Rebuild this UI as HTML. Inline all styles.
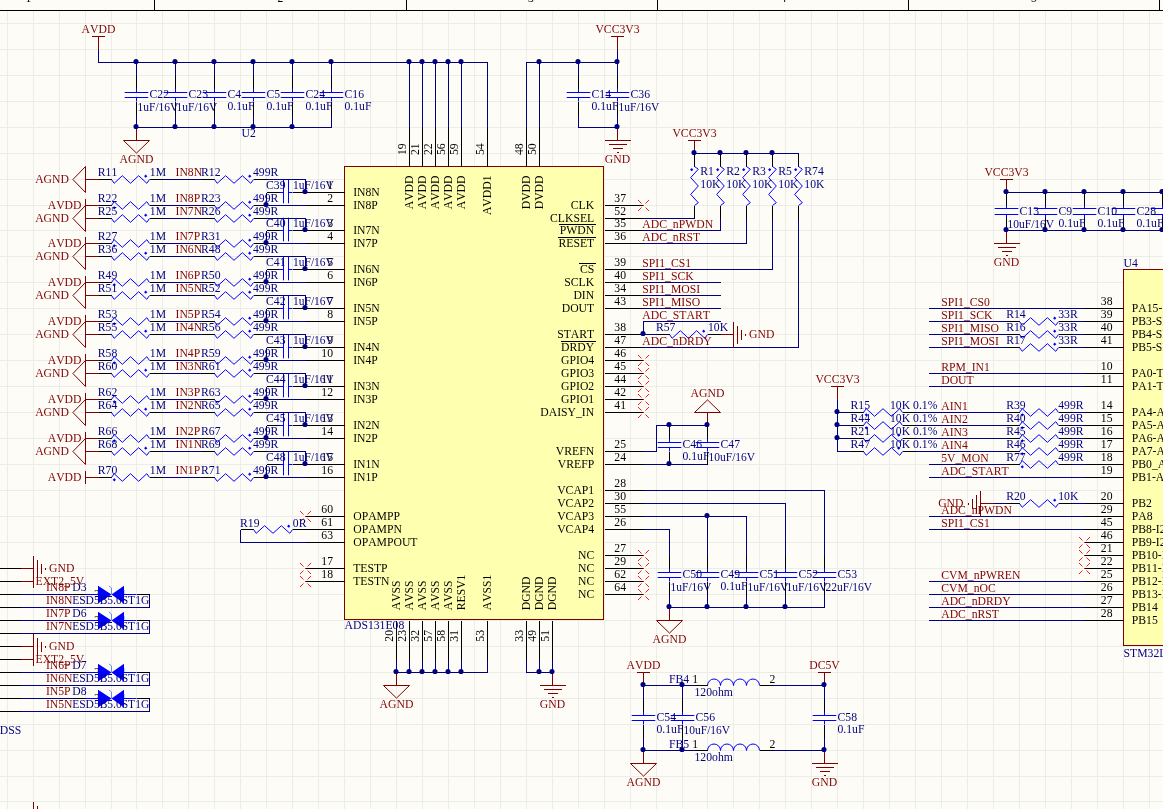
<!DOCTYPE html>
<html lang="en"><head><meta charset="utf-8"><title>Schematic</title>
<style>
html,body{margin:0;padding:0;background:#fefcf7;}
body{width:1163px;height:809px;overflow:hidden;}
svg{display:block;}
text{font-family:"Liberation Serif",serif;font-size:11.7px;font-kerning:none;font-variant-ligatures:none;}
.d{fill:#000080}.n{fill:#800000}.p{fill:#000000}.v{font-size:11.5px}
</style></head>
<body>
<svg width="1163" height="809" viewBox="0 0 1163 809">
<rect width="1163" height="809" fill="#fefcf7"/>
<path d="M7.5 11L7.5 809M33.5 11L33.5 809M59.5 11L59.5 809M85.5 11L85.5 809M111.5 11L111.5 809M136.5 11L136.5 809M162.5 11L162.5 809M188.5 11L188.5 809M214.5 11L214.5 809M240.5 11L240.5 809M266.5 11L266.5 809M292.5 11L292.5 809M318.5 11L318.5 809M344.5 11L344.5 809M370.5 11L370.5 809M396.5 11L396.5 809M422.5 11L422.5 809M448.5 11L448.5 809M474.5 11L474.5 809M500.5 11L500.5 809M526.5 11L526.5 809M552.5 11L552.5 809M578.5 11L578.5 809M604.5 11L604.5 809M630.5 11L630.5 809M656.5 11L656.5 809M682.5 11L682.5 809M707.5 11L707.5 809M733.5 11L733.5 809M759.5 11L759.5 809M785.5 11L785.5 809M811.5 11L811.5 809M837.5 11L837.5 809M863.5 11L863.5 809M889.5 11L889.5 809M915.5 11L915.5 809M941.5 11L941.5 809M967.5 11L967.5 809M993.5 11L993.5 809M1019.5 11L1019.5 809M1045.5 11L1045.5 809M1071.5 11L1071.5 809M1097.5 11L1097.5 809M1123.5 11L1123.5 809M1149.5 11L1149.5 809M0 23.5L1163 23.5M0 49.5L1163 49.5M0 75.5L1163 75.5M0 101.5L1163 101.5M0 127.5L1163 127.5M0 153.5L1163 153.5M0 179.5L1163 179.5M0 205.5L1163 205.5M0 230.5L1163 230.5M0 256.5L1163 256.5M0 282.5L1163 282.5M0 308.5L1163 308.5M0 334.5L1163 334.5M0 360.5L1163 360.5M0 386.5L1163 386.5M0 412.5L1163 412.5M0 438.5L1163 438.5M0 464.5L1163 464.5M0 490.5L1163 490.5M0 516.5L1163 516.5M0 542.5L1163 542.5M0 568.5L1163 568.5M0 594.5L1163 594.5M0 620.5L1163 620.5M0 646.5L1163 646.5M0 672.5L1163 672.5M0 698.5L1163 698.5M0 724.5L1163 724.5M0 750.5L1163 750.5M0 776.5L1163 776.5M0 801.5L1163 801.5" stroke="#ececE8" stroke-width="1" fill="none" shape-rendering="crispEdges"/>
<path d="M0 10.5H1163M154.5 0V10.5M406.5 0V10.5M657.5 0V10.5M908.5 0V10.5M1159.5 0V10.5" stroke="#000" stroke-width="1" fill="none" shape-rendering="crispEdges"/>
<rect x="344.5" y="166.5" width="259" height="453" fill="#ffffb0" stroke="#800000" stroke-width="1" shape-rendering="crispEdges"/>
<rect x="1123.5" y="269.5" width="44.5" height="376" fill="#ffffb0" stroke="#800000" stroke-width="1" shape-rendering="crispEdges"/>
<path d="M98.5 49.5L98.5 62.5L487.5 62.5L487.5 127.5M136.5 62.5L136.5 75.5M136.5 114.5L136.5 127.5M175.5 62.5L175.5 75.5M175.5 114.5L175.5 127.5M214.5 62.5L214.5 75.5M214.5 114.5L214.5 127.5M253.5 62.5L253.5 75.5M253.5 114.5L253.5 127.5M292.5 62.5L292.5 75.5M292.5 114.5L292.5 127.5M331.5 62.5L331.5 75.5M331.5 114.5L331.5 127.5M136.5 127.5L331.5 127.5M409.5 62.5L409.5 127.5M422.5 62.5L422.5 127.5M435.5 62.5L435.5 127.5M448.5 62.5L448.5 127.5M461.5 62.5L461.5 127.5M526.5 127.5L526.5 62.5L617.5 62.5M539.5 62.5L539.5 127.5M578.5 62.5L578.5 75.5M578.5 114.5L578.5 127.5M617.5 62.5L617.5 75.5M617.5 114.5L617.5 127.5M578.5 127.5L617.5 127.5M617.5 49.5L617.5 62.5M694.5 153.5L798.5 153.5M643.5 218.5L694.5 218.5M643.5 230.5L720.5 230.5L720.5 218.5M643.5 243.5L746.5 243.5L746.5 218.5M643.5 269.5L772.5 269.5L772.5 218.5M643.5 347.5L798.5 347.5L798.5 218.5M643.5 282.5L720.5 282.5M643.5 295.5L720.5 295.5M643.5 308.5L720.5 308.5M643.5 334.5L643.5 321.5L720.5 321.5M643.5 334.5L656.5 334.5M643.5 451.5L656.5 451.5L656.5 425.5L707.5 425.5M643.5 464.5L707.5 464.5M643.5 490.5L824.5 490.5L824.5 555.5M643.5 503.5L785.5 503.5L785.5 555.5M643.5 516.5L746.5 516.5L746.5 555.5M707.5 516.5L707.5 555.5M643.5 529.5L669.5 529.5L669.5 555.5M669.5 594.5L669.5 607.5M707.5 594.5L707.5 607.5M746.5 594.5L746.5 607.5M785.5 594.5L785.5 607.5M824.5 594.5L824.5 607.5M669.5 607.5L824.5 607.5M396.5 659.5L396.5 672.5M409.5 659.5L409.5 672.5M422.5 659.5L422.5 672.5M435.5 659.5L435.5 672.5M448.5 659.5L448.5 672.5M461.5 659.5L461.5 672.5M396.5 672.5L487.5 672.5L487.5 659.5M526.5 659.5L526.5 672.5L552.5 672.5L552.5 659.5M539.5 659.5L539.5 672.5M162.5 179.5L201.5 179.5M266.5 179.5L305.5 179.5L305.5 192.5M266.5 192.5L266.5 205.5M162.5 205.5L201.5 205.5M266.5 205.5L305.5 205.5M162.5 218.5L201.5 218.5M266.5 218.5L305.5 218.5L305.5 230.5M266.5 230.5L266.5 243.5M162.5 243.5L201.5 243.5M266.5 243.5L305.5 243.5M162.5 256.5L201.5 256.5M266.5 256.5L305.5 256.5L305.5 269.5M266.5 269.5L266.5 282.5M162.5 282.5L201.5 282.5M266.5 282.5L305.5 282.5M162.5 295.5L201.5 295.5M266.5 295.5L305.5 295.5L305.5 308.5M266.5 308.5L266.5 321.5M162.5 321.5L201.5 321.5M266.5 321.5L305.5 321.5M162.5 334.5L201.5 334.5M266.5 334.5L305.5 334.5L305.5 347.5M266.5 347.5L266.5 360.5M162.5 360.5L201.5 360.5M266.5 360.5L305.5 360.5M162.5 373.5L201.5 373.5M266.5 373.5L305.5 373.5L305.5 386.5M266.5 386.5L266.5 399.5M162.5 399.5L201.5 399.5M266.5 399.5L305.5 399.5M162.5 412.5L201.5 412.5M266.5 412.5L305.5 412.5L305.5 425.5M266.5 425.5L266.5 438.5M162.5 438.5L201.5 438.5M266.5 438.5L305.5 438.5M162.5 451.5L201.5 451.5M266.5 451.5L305.5 451.5L305.5 464.5M266.5 464.5L266.5 477.5M162.5 477.5L201.5 477.5M266.5 477.5L305.5 477.5M240.5 529.5L240.5 542.5L305.5 542.5M20.5 594.5L72.5 594.5M149.5 594.5L149.5 607.5L20.5 607.5M20.5 620.5L72.5 620.5M149.5 620.5L149.5 633.5L20.5 633.5M20.5 672.5L72.5 672.5M149.5 672.5L149.5 685.5L20.5 685.5M20.5 698.5L72.5 698.5M149.5 698.5L149.5 711.5L20.5 711.5M643.5 685.5L694.5 685.5M772.5 685.5L824.5 685.5M643.5 750.5L694.5 750.5M772.5 750.5L824.5 750.5M643.5 685.5L643.5 698.5M643.5 737.5L643.5 750.5M682.5 685.5L682.5 698.5M682.5 737.5L682.5 750.5M824.5 685.5L824.5 698.5M824.5 737.5L824.5 750.5M1006.5 192.5L1163 192.5M1006.5 230.5L1163 230.5M928.5 308.5L1084.5 308.5M928.5 321.5L1006.5 321.5M1071.5 321.5L1084.5 321.5M928.5 334.5L1006.5 334.5M1071.5 334.5L1084.5 334.5M928.5 347.5L1006.5 347.5M1071.5 347.5L1084.5 347.5M928.5 373.5L1084.5 373.5M928.5 386.5L1084.5 386.5M915.5 412.5L1006.5 412.5M1071.5 412.5L1084.5 412.5M915.5 425.5L1006.5 425.5M1071.5 425.5L1084.5 425.5M915.5 438.5L1006.5 438.5M1071.5 438.5L1084.5 438.5M915.5 451.5L1006.5 451.5M1071.5 451.5L1084.5 451.5M928.5 464.5L1006.5 464.5M1071.5 464.5L1084.5 464.5M928.5 477.5L1084.5 477.5M993.5 503.5L1006.5 503.5M1071.5 503.5L1084.5 503.5M928.5 516.5L1084.5 516.5M928.5 529.5L1084.5 529.5M928.5 581.5L1084.5 581.5M928.5 594.5L1084.5 594.5M928.5 607.5L1084.5 607.5M928.5 620.5L1084.5 620.5M837.5 399.5L837.5 451.5L850.5 451.5M837.5 412.5L850.5 412.5M837.5 425.5L850.5 425.5M837.5 438.5L850.5 438.5" stroke="#000080" stroke-width="1" fill="none" shape-rendering="crispEdges"/>
<path d="M305.5 192.5L344.5 192.5M305.5 205.5L344.5 205.5M305.5 230.5L344.5 230.5M305.5 243.5L344.5 243.5M305.5 269.5L344.5 269.5M305.5 282.5L344.5 282.5M305.5 308.5L344.5 308.5M305.5 321.5L344.5 321.5M305.5 347.5L344.5 347.5M305.5 360.5L344.5 360.5M305.5 386.5L344.5 386.5M305.5 399.5L344.5 399.5M305.5 425.5L344.5 425.5M305.5 438.5L344.5 438.5M305.5 464.5L344.5 464.5M305.5 477.5L344.5 477.5M305.5 516.5L344.5 516.5M305.5 529.5L344.5 529.5M305.5 542.5L344.5 542.5M305.5 568.5L344.5 568.5M305.5 581.5L344.5 581.5M604.5 205.5L643.5 205.5M604.5 218.5L643.5 218.5M604.5 230.5L643.5 230.5M559.26 224.5L596.2 224.5M604.5 243.5L643.5 243.5M557.94 237.5L596.2 237.5M604.5 269.5L643.5 269.5M579.39 263.5L596.2 263.5M604.5 282.5L643.5 282.5M604.5 295.5L643.5 295.5M604.5 308.5L643.5 308.5M604.5 334.5L643.5 334.5M604.5 347.5L643.5 347.5M560.55 341.5L596.2 341.5M604.5 360.5L643.5 360.5M604.5 373.5L643.5 373.5M604.5 386.5L643.5 386.5M604.5 399.5L643.5 399.5M604.5 412.5L643.5 412.5M604.5 451.5L643.5 451.5M604.5 464.5L643.5 464.5M604.5 490.5L643.5 490.5M604.5 503.5L643.5 503.5M604.5 516.5L643.5 516.5M604.5 529.5L643.5 529.5M604.5 555.5L643.5 555.5M604.5 568.5L643.5 568.5M604.5 581.5L643.5 581.5M604.5 594.5L643.5 594.5M409.5 166.5L409.5 127.5M422.5 166.5L422.5 127.5M435.5 166.5L435.5 127.5M448.5 166.5L448.5 127.5M461.5 166.5L461.5 127.5M487.5 166.5L487.5 127.5M526.5 166.5L526.5 127.5M539.5 166.5L539.5 127.5M396.5 620.5L396.5 659.5M409.5 620.5L409.5 659.5M422.5 620.5L422.5 659.5M435.5 620.5L435.5 659.5M448.5 620.5L448.5 659.5M461.5 620.5L461.5 659.5M487.5 620.5L487.5 659.5M526.5 620.5L526.5 659.5M539.5 620.5L539.5 659.5M552.5 620.5L552.5 659.5M136.5 75.5L136.5 88.5M136.5 101.5L136.5 114.5M175.5 75.5L175.5 88.5M175.5 101.5L175.5 114.5M214.5 75.5L214.5 88.5M214.5 101.5L214.5 114.5M253.5 75.5L253.5 88.5M253.5 101.5L253.5 114.5M292.5 75.5L292.5 88.5M292.5 101.5L292.5 114.5M331.5 75.5L331.5 88.5M331.5 101.5L331.5 114.5M578.5 75.5L578.5 88.5M578.5 101.5L578.5 114.5M617.5 75.5L617.5 88.5M617.5 101.5L617.5 114.5M694.5 153.5L694.5 166.5M694.5 205.5L694.5 218.5M720.5 153.5L720.5 166.5M720.5 205.5L720.5 218.5M746.5 153.5L746.5 166.5M746.5 205.5L746.5 218.5M772.5 153.5L772.5 166.5M772.5 205.5L772.5 218.5M798.5 153.5L798.5 166.5M798.5 205.5L798.5 218.5M656.5 334.5L669.5 334.5M707.5 334.5L720.5 334.5M669.5 425.5L669.5 438.5M669.5 451.5L669.5 464.5M707.5 425.5L707.5 438.5M707.5 451.5L707.5 464.5M669.5 555.5L669.5 568.5M669.5 581.5L669.5 594.5M707.5 555.5L707.5 568.5M707.5 581.5L707.5 594.5M746.5 555.5L746.5 568.5M746.5 581.5L746.5 594.5M785.5 555.5L785.5 568.5M785.5 581.5L785.5 594.5M824.5 555.5L824.5 568.5M824.5 581.5L824.5 594.5M98.5 179.5L111.5 179.5M149.5 179.5L162.5 179.5M201.5 179.5L214.5 179.5M253.5 179.5L266.5 179.5M266.5 192.5L279.5 192.5M292.5 192.5L305.5 192.5M98.5 205.5L111.5 205.5M149.5 205.5L162.5 205.5M201.5 205.5L214.5 205.5M253.5 205.5L266.5 205.5M98.5 218.5L111.5 218.5M149.5 218.5L162.5 218.5M201.5 218.5L214.5 218.5M253.5 218.5L266.5 218.5M266.5 230.5L279.5 230.5M292.5 230.5L305.5 230.5M98.5 243.5L111.5 243.5M149.5 243.5L162.5 243.5M201.5 243.5L214.5 243.5M253.5 243.5L266.5 243.5M98.5 256.5L111.5 256.5M149.5 256.5L162.5 256.5M201.5 256.5L214.5 256.5M253.5 256.5L266.5 256.5M266.5 269.5L279.5 269.5M292.5 269.5L305.5 269.5M98.5 282.5L111.5 282.5M149.5 282.5L162.5 282.5M201.5 282.5L214.5 282.5M253.5 282.5L266.5 282.5M98.5 295.5L111.5 295.5M149.5 295.5L162.5 295.5M201.5 295.5L214.5 295.5M253.5 295.5L266.5 295.5M266.5 308.5L279.5 308.5M292.5 308.5L305.5 308.5M98.5 321.5L111.5 321.5M149.5 321.5L162.5 321.5M201.5 321.5L214.5 321.5M253.5 321.5L266.5 321.5M98.5 334.5L111.5 334.5M149.5 334.5L162.5 334.5M201.5 334.5L214.5 334.5M253.5 334.5L266.5 334.5M266.5 347.5L279.5 347.5M292.5 347.5L305.5 347.5M98.5 360.5L111.5 360.5M149.5 360.5L162.5 360.5M201.5 360.5L214.5 360.5M253.5 360.5L266.5 360.5M98.5 373.5L111.5 373.5M149.5 373.5L162.5 373.5M201.5 373.5L214.5 373.5M253.5 373.5L266.5 373.5M266.5 386.5L279.5 386.5M292.5 386.5L305.5 386.5M98.5 399.5L111.5 399.5M149.5 399.5L162.5 399.5M201.5 399.5L214.5 399.5M253.5 399.5L266.5 399.5M98.5 412.5L111.5 412.5M149.5 412.5L162.5 412.5M201.5 412.5L214.5 412.5M253.5 412.5L266.5 412.5M266.5 425.5L279.5 425.5M292.5 425.5L305.5 425.5M98.5 438.5L111.5 438.5M149.5 438.5L162.5 438.5M201.5 438.5L214.5 438.5M253.5 438.5L266.5 438.5M98.5 451.5L111.5 451.5M149.5 451.5L162.5 451.5M201.5 451.5L214.5 451.5M253.5 451.5L266.5 451.5M266.5 464.5L279.5 464.5M292.5 464.5L305.5 464.5M98.5 477.5L111.5 477.5M149.5 477.5L162.5 477.5M201.5 477.5L214.5 477.5M253.5 477.5L266.5 477.5M240.5 529.5L253.5 529.5M292.5 529.5L305.5 529.5M0 568.5L20.5 568.5M0 581.5L20.5 581.5M0 594.5L20.5 594.5M0 607.5L20.5 607.5M0 620.5L20.5 620.5M0 633.5L20.5 633.5M0 646.5L20.5 646.5M0 659.5L20.5 659.5M0 672.5L20.5 672.5M0 685.5L20.5 685.5M0 698.5L20.5 698.5M0 711.5L20.5 711.5M72.5 594.5L85.5 594.5M136.5 594.5L149.5 594.5M72.5 620.5L85.5 620.5M136.5 620.5L149.5 620.5M72.5 672.5L85.5 672.5M136.5 672.5L149.5 672.5M72.5 698.5L85.5 698.5M136.5 698.5L149.5 698.5M694.5 685.5L707.5 685.5M759.5 685.5L772.5 685.5M694.5 750.5L707.5 750.5M759.5 750.5L772.5 750.5M643.5 698.5L643.5 711.5M643.5 724.5L643.5 737.5M682.5 698.5L682.5 711.5M682.5 724.5L682.5 737.5M824.5 698.5L824.5 711.5M824.5 724.5L824.5 737.5M1006.5 192L1006.5 205M1006.5 218L1006.5 231M1045.5 192L1045.5 205M1045.5 218L1045.5 231M1084.5 192L1084.5 205M1084.5 218L1084.5 231M1123.5 192L1123.5 205M1123.5 218L1123.5 231M1162.5 192L1162.5 205M1162.5 218L1162.5 231M1084.5 308.5L1123.5 308.5M1084.5 321.5L1123.5 321.5M1006.5 321.5L1019.5 321.5M1058.5 321.5L1071.5 321.5M1084.5 334.5L1123.5 334.5M1006.5 334.5L1019.5 334.5M1058.5 334.5L1071.5 334.5M1084.5 347.5L1123.5 347.5M1006.5 347.5L1019.5 347.5M1058.5 347.5L1071.5 347.5M1084.5 373.5L1123.5 373.5M1084.5 386.5L1123.5 386.5M1084.5 412.5L1123.5 412.5M1006.5 412.5L1019.5 412.5M1058.5 412.5L1071.5 412.5M1084.5 425.5L1123.5 425.5M1006.5 425.5L1019.5 425.5M1058.5 425.5L1071.5 425.5M1084.5 438.5L1123.5 438.5M1006.5 438.5L1019.5 438.5M1058.5 438.5L1071.5 438.5M1084.5 451.5L1123.5 451.5M1006.5 451.5L1019.5 451.5M1058.5 451.5L1071.5 451.5M1084.5 464.5L1123.5 464.5M1006.5 464.5L1019.5 464.5M1058.5 464.5L1071.5 464.5M1084.5 477.5L1123.5 477.5M1084.5 503.5L1123.5 503.5M1006.5 503.5L1019.5 503.5M1058.5 503.5L1071.5 503.5M1084.5 516.5L1123.5 516.5M1084.5 529.5L1123.5 529.5M1084.5 542.5L1123.5 542.5M1084.5 555.5L1123.5 555.5M1084.5 568.5L1123.5 568.5M1084.5 581.5L1123.5 581.5M1084.5 594.5L1123.5 594.5M1084.5 607.5L1123.5 607.5M1084.5 620.5L1123.5 620.5M850.5 412.5L863.5 412.5M902.5 412.5L915.5 412.5M850.5 425.5L863.5 425.5M902.5 425.5L915.5 425.5M850.5 438.5L863.5 438.5M902.5 438.5L915.5 438.5M850.5 451.5L863.5 451.5M902.5 451.5L915.5 451.5" stroke="#000000" stroke-width="1" fill="none" shape-rendering="crispEdges"/>
<path d="M136.5 88.5L136.5 92.25M136.5 97.75L136.5 101.5M124.7 92.5L148.3 92.5M124.7 97.5L148.3 97.5M175.5 88.5L175.5 92.25M175.5 97.75L175.5 101.5M163.7 92.5L187.3 92.5M163.7 97.5L187.3 97.5M214.5 88.5L214.5 92.25M214.5 97.75L214.5 101.5M202.7 92.5L226.3 92.5M202.7 97.5L226.3 97.5M253.5 88.5L253.5 92.25M253.5 97.75L253.5 101.5M241.7 92.5L265.3 92.5M241.7 97.5L265.3 97.5M292.5 88.5L292.5 92.25M292.5 97.75L292.5 101.5M280.7 92.5L304.3 92.5M280.7 97.5L304.3 97.5M331.5 88.5L331.5 92.25M331.5 97.75L331.5 101.5M319.7 92.5L343.3 92.5M319.7 97.5L343.3 97.5M578.5 88.5L578.5 92.25M578.5 97.75L578.5 101.5M566.7 92.5L590.3 92.5M566.7 97.5L590.3 97.5M617.5 88.5L617.5 92.25M617.5 97.75L617.5 101.5M605.7 92.5L629.3 92.5M605.7 97.5L629.3 97.5M694.5 166.5L698.3 169.23L690.7 177.62L698.3 186L690.7 194.38L698.3 202.77L694.5 205.5M720.5 166.5L724.3 169.23L716.7 177.62L724.3 186L716.7 194.38L724.3 202.77L720.5 205.5M746.5 166.5L750.3 169.23L742.7 177.62L750.3 186L742.7 194.38L750.3 202.77L746.5 205.5M772.5 166.5L776.3 169.23L768.7 177.62L776.3 186L768.7 194.38L776.3 202.77L772.5 205.5M798.5 166.5L802.3 169.23L794.7 177.62L802.3 186L794.7 194.38L802.3 202.77L798.5 205.5M669.5 334.5L672.16 338.3L680.33 330.7L688.5 338.3L696.67 330.7L704.84 338.3L707.5 334.5M669.5 438.5L669.5 442.25M669.5 447.75L669.5 451.5M657.7 442.5L681.3 442.5M657.7 447.5L681.3 447.5M707.5 438.5L707.5 442.25M707.5 447.75L707.5 451.5M695.7 442.5L719.3 442.5M695.7 447.5L719.3 447.5M669.5 568.5L669.5 572.25M669.5 577.75L669.5 581.5M657.7 572.5L681.3 572.5M657.7 577.5L681.3 577.5M707.5 568.5L707.5 572.25M707.5 577.75L707.5 581.5M695.7 572.5L719.3 572.5M695.7 577.5L719.3 577.5M746.5 568.5L746.5 572.25M746.5 577.75L746.5 581.5M734.7 572.5L758.3 572.5M734.7 577.5L758.3 577.5M785.5 568.5L785.5 572.25M785.5 577.75L785.5 581.5M773.7 572.5L797.3 572.5M773.7 577.5L797.3 577.5M824.5 568.5L824.5 572.25M824.5 577.75L824.5 581.5M812.7 572.5L836.3 572.5M812.7 577.5L836.3 577.5M111.5 179.5L114.16 183.3L122.33 175.7L130.5 183.3L138.67 175.7L146.84 183.3L149.5 179.5M214.5 179.5L217.23 183.3L225.62 175.7L234 183.3L242.38 175.7L250.77 183.3L253.5 179.5M279.5 192.5L283.25 192.5M288.75 192.5L292.5 192.5M283.5 179.7L283.5 203.3M288.5 179.7L288.5 203.3M111.5 205.5L114.16 201.7L122.33 209.3L130.5 201.7L138.67 209.3L146.84 201.7L149.5 205.5M214.5 205.5L217.23 209.3L225.62 201.7L234 209.3L242.38 201.7L250.77 209.3L253.5 205.5M111.5 218.5L114.16 222.3L122.33 214.7L130.5 222.3L138.67 214.7L146.84 222.3L149.5 218.5M214.5 218.5L217.23 222.3L225.62 214.7L234 222.3L242.38 214.7L250.77 222.3L253.5 218.5M279.5 230.5L283.25 230.5M288.75 230.5L292.5 230.5M283.5 217.7L283.5 241.3M288.5 217.7L288.5 241.3M111.5 243.5L114.16 239.7L122.33 247.3L130.5 239.7L138.67 247.3L146.84 239.7L149.5 243.5M214.5 243.5L217.23 247.3L225.62 239.7L234 247.3L242.38 239.7L250.77 247.3L253.5 243.5M111.5 256.5L114.16 260.3L122.33 252.7L130.5 260.3L138.67 252.7L146.84 260.3L149.5 256.5M214.5 256.5L217.23 260.3L225.62 252.7L234 260.3L242.38 252.7L250.77 260.3L253.5 256.5M279.5 269.5L283.25 269.5M288.75 269.5L292.5 269.5M283.5 256.7L283.5 280.3M288.5 256.7L288.5 280.3M111.5 282.5L114.16 278.7L122.33 286.3L130.5 278.7L138.67 286.3L146.84 278.7L149.5 282.5M214.5 282.5L217.23 286.3L225.62 278.7L234 286.3L242.38 278.7L250.77 286.3L253.5 282.5M111.5 295.5L114.16 299.3L122.33 291.7L130.5 299.3L138.67 291.7L146.84 299.3L149.5 295.5M214.5 295.5L217.23 299.3L225.62 291.7L234 299.3L242.38 291.7L250.77 299.3L253.5 295.5M279.5 308.5L283.25 308.5M288.75 308.5L292.5 308.5M283.5 295.7L283.5 319.3M288.5 295.7L288.5 319.3M111.5 321.5L114.16 317.7L122.33 325.3L130.5 317.7L138.67 325.3L146.84 317.7L149.5 321.5M214.5 321.5L217.23 325.3L225.62 317.7L234 325.3L242.38 317.7L250.77 325.3L253.5 321.5M111.5 334.5L114.16 338.3L122.33 330.7L130.5 338.3L138.67 330.7L146.84 338.3L149.5 334.5M214.5 334.5L217.23 338.3L225.62 330.7L234 338.3L242.38 330.7L250.77 338.3L253.5 334.5M279.5 347.5L283.25 347.5M288.75 347.5L292.5 347.5M283.5 334.7L283.5 358.3M288.5 334.7L288.5 358.3M111.5 360.5L114.16 356.7L122.33 364.3L130.5 356.7L138.67 364.3L146.84 356.7L149.5 360.5M214.5 360.5L217.23 364.3L225.62 356.7L234 364.3L242.38 356.7L250.77 364.3L253.5 360.5M111.5 373.5L114.16 377.3L122.33 369.7L130.5 377.3L138.67 369.7L146.84 377.3L149.5 373.5M214.5 373.5L217.23 377.3L225.62 369.7L234 377.3L242.38 369.7L250.77 377.3L253.5 373.5M279.5 386.5L283.25 386.5M288.75 386.5L292.5 386.5M283.5 373.7L283.5 397.3M288.5 373.7L288.5 397.3M111.5 399.5L114.16 395.7L122.33 403.3L130.5 395.7L138.67 403.3L146.84 395.7L149.5 399.5M214.5 399.5L217.23 403.3L225.62 395.7L234 403.3L242.38 395.7L250.77 403.3L253.5 399.5M111.5 412.5L114.16 416.3L122.33 408.7L130.5 416.3L138.67 408.7L146.84 416.3L149.5 412.5M214.5 412.5L217.23 416.3L225.62 408.7L234 416.3L242.38 408.7L250.77 416.3L253.5 412.5M279.5 425.5L283.25 425.5M288.75 425.5L292.5 425.5M283.5 412.7L283.5 436.3M288.5 412.7L288.5 436.3M111.5 438.5L114.16 434.7L122.33 442.3L130.5 434.7L138.67 442.3L146.84 434.7L149.5 438.5M214.5 438.5L217.23 442.3L225.62 434.7L234 442.3L242.38 434.7L250.77 442.3L253.5 438.5M111.5 451.5L114.16 455.3L122.33 447.7L130.5 455.3L138.67 447.7L146.84 455.3L149.5 451.5M214.5 451.5L217.23 455.3L225.62 447.7L234 455.3L242.38 447.7L250.77 455.3L253.5 451.5M279.5 464.5L283.25 464.5M288.75 464.5L292.5 464.5M283.5 451.7L283.5 475.3M288.5 451.7L288.5 475.3M111.5 477.5L114.16 473.7L122.33 481.3L130.5 473.7L138.67 481.3L146.84 473.7L149.5 477.5M214.5 477.5L217.23 481.3L225.62 473.7L234 481.3L242.38 473.7L250.77 481.3L253.5 477.5M253.5 529.5L256.23 533.3L264.62 525.7L273 533.3L281.38 525.7L289.77 533.3L292.5 529.5M85.5 594.5L98.5 594.5M123.5 594.5L136.5 594.5M85.5 620.5L98.5 620.5M123.5 620.5L136.5 620.5M85.5 672.5L98.5 672.5M123.5 672.5L136.5 672.5M85.5 698.5L98.5 698.5M123.5 698.5L136.5 698.5M707.5 685.5a6.5 6.5 0 0 1 13 0a6.5 6.5 0 0 1 13 0a6.5 6.5 0 0 1 13 0a6.5 6.5 0 0 1 13 0M707.5 750.5a6.5 6.5 0 0 1 13 0a6.5 6.5 0 0 1 13 0a6.5 6.5 0 0 1 13 0a6.5 6.5 0 0 1 13 0M643.5 711.5L643.5 715.25M643.5 720.75L643.5 724.5M631.7 715.5L655.3 715.5M631.7 720.5L655.3 720.5M682.5 711.5L682.5 715.25M682.5 720.75L682.5 724.5M670.7 715.5L694.3 715.5M670.7 720.5L694.3 720.5M824.5 711.5L824.5 715.25M824.5 720.75L824.5 724.5M812.7 715.5L836.3 715.5M812.7 720.5L836.3 720.5M1006.5 205L1006.5 208.75M1006.5 214.25L1006.5 218M994.7 208.5L1018.3 208.5M994.7 214.5L1018.3 214.5M1045.5 205L1045.5 208.75M1045.5 214.25L1045.5 218M1033.7 208.5L1057.3 208.5M1033.7 214.5L1057.3 214.5M1084.5 205L1084.5 208.75M1084.5 214.25L1084.5 218M1072.7 208.5L1096.3 208.5M1072.7 214.5L1096.3 214.5M1123.5 205L1123.5 208.75M1123.5 214.25L1123.5 218M1111.7 208.5L1135.3 208.5M1111.7 214.5L1135.3 214.5M1162.5 205L1162.5 208.75M1162.5 214.25L1162.5 218M1150.7 208.5L1174.3 208.5M1150.7 214.5L1174.3 214.5M1019.5 321.5L1022.23 325.3L1030.62 317.7L1039 325.3L1047.38 317.7L1055.77 325.3L1058.5 321.5M1019.5 334.5L1022.23 338.3L1030.62 330.7L1039 338.3L1047.38 330.7L1055.77 338.3L1058.5 334.5M1019.5 347.5L1022.23 351.3L1030.62 343.7L1039 351.3L1047.38 343.7L1055.77 351.3L1058.5 347.5M1019.5 412.5L1022.23 408.7L1030.62 416.3L1039 408.7L1047.38 416.3L1055.77 408.7L1058.5 412.5M1019.5 425.5L1022.23 421.7L1030.62 429.3L1039 421.7L1047.38 429.3L1055.77 421.7L1058.5 425.5M1019.5 438.5L1022.23 434.7L1030.62 442.3L1039 434.7L1047.38 442.3L1055.77 434.7L1058.5 438.5M1019.5 451.5L1022.23 447.7L1030.62 455.3L1039 447.7L1047.38 455.3L1055.77 447.7L1058.5 451.5M1019.5 464.5L1022.23 460.7L1030.62 468.3L1039 460.7L1047.38 468.3L1055.77 460.7L1058.5 464.5M1019.5 503.5L1022.23 507.3L1030.62 499.7L1039 507.3L1047.38 499.7L1055.77 507.3L1058.5 503.5M863.5 412.5L866.23 408.7L874.62 416.3L883 408.7L891.38 416.3L899.77 408.7L902.5 412.5M863.5 425.5L866.23 421.7L874.62 429.3L883 421.7L891.38 429.3L899.77 421.7L902.5 425.5M863.5 438.5L866.23 442.3L874.62 434.7L883 442.3L891.38 434.7L899.77 442.3L902.5 438.5M863.5 451.5L866.23 455.3L874.62 447.7L883 455.3L891.38 447.7L899.77 455.3L902.5 451.5" stroke="#0000ff" stroke-width="1" fill="none" stroke-linejoin="miter"/>
<path d="M98.5 49.5L98.5 36.5M92 36.5L105 36.5M136.5 127.5L136.5 140.5M617.5 49.5L617.5 36.5M611 36.5L624 36.5M617.5 127.5L617.5 140.5M604.5 140.5L630.5 140.5M608.5 144.5L626.5 144.5M612.5 148.5L622.5 148.5M616.5 152.5L618.5 152.5M694.5 153.5L694.5 140.5M688 140.5L701 140.5M720.5 334.5L733.5 334.5M733.5 321.5L733.5 347.5M737.5 325.5L737.5 343.5M741.5 329.5L741.5 339.5M745.5 333.5L745.5 335.5M707.5 425.5L707.5 412.5M669.5 607.5L669.5 620.5M396.5 672.5L396.5 685.5M552.5 672.5L552.5 685.5M539.5 685.5L565.5 685.5M543.5 689.5L561.5 689.5M547.5 693.5L557.5 693.5M551.5 697.5L553.5 697.5M98.5 179.5L85.5 179.5M98.5 205.5L85.5 205.5M85.5 199L85.5 212M98.5 218.5L85.5 218.5M98.5 243.5L85.5 243.5M85.5 237L85.5 250M98.5 256.5L85.5 256.5M98.5 282.5L85.5 282.5M85.5 276L85.5 289M98.5 295.5L85.5 295.5M98.5 321.5L85.5 321.5M85.5 315L85.5 328M98.5 334.5L85.5 334.5M98.5 360.5L85.5 360.5M85.5 354L85.5 367M98.5 373.5L85.5 373.5M98.5 399.5L85.5 399.5M85.5 393L85.5 406M98.5 412.5L85.5 412.5M98.5 438.5L85.5 438.5M85.5 432L85.5 445M98.5 451.5L85.5 451.5M98.5 477.5L85.5 477.5M85.5 471L85.5 484M20.5 568.5L33.5 568.5M33.5 555.5L33.5 581.5M37.5 559.5L37.5 577.5M41.5 563.5L41.5 573.5M45.5 567.5L45.5 569.5M20.5 581.5L33.5 581.5M33.5 575L33.5 588M20.5 646.5L33.5 646.5M33.5 633.5L33.5 659.5M37.5 637.5L37.5 655.5M41.5 641.5L41.5 651.5M45.5 645.5L45.5 647.5M20.5 659.5L33.5 659.5M33.5 653L33.5 666M20.5 814.5L33.5 814.5M33.5 801.5L33.5 827.5M37.5 805.5L37.5 823.5M41.5 809.5L41.5 819.5M45.5 813.5L45.5 815.5M643.5 685.5L643.5 672.5M637 672.5L650 672.5M824.5 685.5L824.5 672.5M818 672.5L831 672.5M643.5 750.5L643.5 763.5M824.5 750.5L824.5 763.5M811.5 763.5L837.5 763.5M815.5 767.5L833.5 767.5M819.5 771.5L829.5 771.5M823.5 775.5L825.5 775.5M1006.5 192.5L1006.5 179.5M1000 179.5L1013 179.5M1006.5 230.5L1006.5 243.5M993.5 243.5L1019.5 243.5M997.5 247.5L1015.5 247.5M1001.5 251.5L1011.5 251.5M1005.5 255.5L1007.5 255.5M993.5 503.5L980.5 503.5M980.5 490.5L980.5 516.5M976.5 494.5L976.5 512.5M972.5 498.5L972.5 508.5M968.5 502.5L968.5 504.5M837.5 399.5L837.5 386.5M831 386.5L844 386.5" stroke="#800000" stroke-width="1" fill="none" shape-rendering="crispEdges"/>
<path d="M123.5 140.5L149.5 140.5L136.5 153.1ZM694.5 412.5L720.5 412.5L707.5 399.9ZM656.5 620.5L682.5 620.5L669.5 633.1ZM383.5 685.5L409.5 685.5L396.5 698.1ZM85.5 166.5L85.5 192.5L72.9 179.5ZM85.5 205.5L85.5 231.5L72.9 218.5ZM85.5 243.5L85.5 269.5L72.9 256.5ZM85.5 282.5L85.5 308.5L72.9 295.5ZM85.5 321.5L85.5 347.5L72.9 334.5ZM85.5 360.5L85.5 386.5L72.9 373.5ZM85.5 399.5L85.5 425.5L72.9 412.5ZM85.5 438.5L85.5 464.5L72.9 451.5ZM630.5 763.5L656.5 763.5L643.5 776.1Z" stroke="#800000" stroke-width="1" fill="none"/>
<path d="M645.5 207.5L649 211M645.5 203.5L649 200M641.5 207.5L638 211M641.5 203.5L638 200M645.5 362.5L649 366M645.5 358.5L649 355M641.5 362.5L638 366M641.5 358.5L638 355M645.5 375.5L649 379M645.5 371.5L649 368M641.5 375.5L638 379M641.5 371.5L638 368M645.5 388.5L649 392M645.5 384.5L649 381M641.5 388.5L638 392M641.5 384.5L638 381M645.5 401.5L649 405M645.5 397.5L649 394M641.5 401.5L638 405M641.5 397.5L638 394M645.5 414.5L649 418M645.5 410.5L649 407M641.5 414.5L638 418M641.5 410.5L638 407M645.5 557.5L649 561M645.5 553.5L649 550M641.5 557.5L638 561M641.5 553.5L638 550M645.5 570.5L649 574M645.5 566.5L649 563M641.5 570.5L638 574M641.5 566.5L638 563M645.5 583.5L649 587M645.5 579.5L649 576M641.5 583.5L638 587M641.5 579.5L638 576M645.5 596.5L649 600M645.5 592.5L649 589M641.5 596.5L638 600M641.5 592.5L638 589M307.5 518.5L311 522M307.5 514.5L311 511M303.5 518.5L300 522M303.5 514.5L300 511M307.5 570.5L311 574M307.5 566.5L311 563M303.5 570.5L300 574M303.5 566.5L300 563M307.5 583.5L311 587M307.5 579.5L311 576M303.5 583.5L300 587M303.5 579.5L300 576M1086.5 544.5L1090 548M1086.5 540.5L1090 537M1082.5 544.5L1079 548M1082.5 540.5L1079 537M1086.5 557.5L1090 561M1086.5 553.5L1090 550M1082.5 557.5L1079 561M1082.5 553.5L1079 550M1086.5 570.5L1090 574M1086.5 566.5L1090 563M1082.5 570.5L1079 574M1082.5 566.5L1079 563" stroke="#ff0000" stroke-width="0.9" fill="none"/>
<g opacity="0.996"><clipPath id="cp45"><rect x="78" y="580.5" width="60" height="13.5"/></clipPath><g clip-path="url(#cp45)"><text class="p" x="99.8" y="597.5" text-anchor="end">2</text><text class="p" x="120.5" y="597.5">1</text></g><clipPath id="cp47"><rect x="78" y="606.5" width="60" height="13.5"/></clipPath><g clip-path="url(#cp47)"><text class="p" x="99.8" y="623.5" text-anchor="end">2</text><text class="p" x="120.5" y="623.5">1</text></g><clipPath id="cp51"><rect x="78" y="658.5" width="60" height="13.5"/></clipPath><g clip-path="url(#cp51)"><text class="p" x="99.8" y="675.5" text-anchor="end">2</text><text class="p" x="120.5" y="675.5">1</text></g><clipPath id="cp53"><rect x="78" y="684.5" width="60" height="13.5"/></clipPath><g clip-path="url(#cp53)"><text class="p" x="99.8" y="701.5" text-anchor="end">2</text><text class="p" x="120.5" y="701.5">1</text></g></g>
<path d="M691.7 168.1l1.6 1.6l-1.6 1.6l-1.6 -1.6z" fill="#0000ff"/><path d="M717.7 168.1l1.6 1.6l-1.6 1.6l-1.6 -1.6z" fill="#0000ff"/><path d="M743.7 168.1l1.6 1.6l-1.6 1.6l-1.6 -1.6z" fill="#0000ff"/><path d="M769.7 168.1l1.6 1.6l-1.6 1.6l-1.6 -1.6z" fill="#0000ff"/><path d="M795.7 168.1l1.6 1.6l-1.6 1.6l-1.6 -1.6z" fill="#0000ff"/><path d="M703.7 329.6l1.6 1.6l-1.6 1.6l-1.6 -1.6z" fill="#0000ff"/><rect x="643" y="205" width="1" height="1" fill="#ff0000"/><rect x="643" y="360" width="1" height="1" fill="#ff0000"/><rect x="643" y="373" width="1" height="1" fill="#ff0000"/><rect x="643" y="386" width="1" height="1" fill="#ff0000"/><rect x="643" y="399" width="1" height="1" fill="#ff0000"/><rect x="643" y="412" width="1" height="1" fill="#ff0000"/><rect x="643" y="555" width="1" height="1" fill="#ff0000"/><rect x="643" y="568" width="1" height="1" fill="#ff0000"/><rect x="643" y="581" width="1" height="1" fill="#ff0000"/><rect x="643" y="594" width="1" height="1" fill="#ff0000"/><path d="M145.7 174.6l1.6 1.6l-1.6 1.6l-1.6 -1.6z" fill="#0000ff"/><path d="M249.7 174.6l1.6 1.6l-1.6 1.6l-1.6 -1.6z" fill="#0000ff"/><path d="M114.3 206.2l1.6 1.6l-1.6 1.6l-1.6 -1.6z" fill="#0000ff"/><path d="M249.7 200.6l1.6 1.6l-1.6 1.6l-1.6 -1.6z" fill="#0000ff"/><path d="M145.7 213.6l1.6 1.6l-1.6 1.6l-1.6 -1.6z" fill="#0000ff"/><path d="M249.7 213.6l1.6 1.6l-1.6 1.6l-1.6 -1.6z" fill="#0000ff"/><path d="M114.3 244.2l1.6 1.6l-1.6 1.6l-1.6 -1.6z" fill="#0000ff"/><path d="M249.7 238.6l1.6 1.6l-1.6 1.6l-1.6 -1.6z" fill="#0000ff"/><path d="M145.7 251.6l1.6 1.6l-1.6 1.6l-1.6 -1.6z" fill="#0000ff"/><path d="M249.7 251.6l1.6 1.6l-1.6 1.6l-1.6 -1.6z" fill="#0000ff"/><path d="M114.3 283.2l1.6 1.6l-1.6 1.6l-1.6 -1.6z" fill="#0000ff"/><path d="M249.7 277.6l1.6 1.6l-1.6 1.6l-1.6 -1.6z" fill="#0000ff"/><path d="M145.7 290.6l1.6 1.6l-1.6 1.6l-1.6 -1.6z" fill="#0000ff"/><path d="M249.7 290.6l1.6 1.6l-1.6 1.6l-1.6 -1.6z" fill="#0000ff"/><path d="M114.3 322.2l1.6 1.6l-1.6 1.6l-1.6 -1.6z" fill="#0000ff"/><path d="M249.7 316.6l1.6 1.6l-1.6 1.6l-1.6 -1.6z" fill="#0000ff"/><path d="M145.7 329.6l1.6 1.6l-1.6 1.6l-1.6 -1.6z" fill="#0000ff"/><path d="M249.7 329.6l1.6 1.6l-1.6 1.6l-1.6 -1.6z" fill="#0000ff"/><path d="M114.3 361.2l1.6 1.6l-1.6 1.6l-1.6 -1.6z" fill="#0000ff"/><path d="M249.7 355.6l1.6 1.6l-1.6 1.6l-1.6 -1.6z" fill="#0000ff"/><path d="M145.7 368.6l1.6 1.6l-1.6 1.6l-1.6 -1.6z" fill="#0000ff"/><path d="M249.7 368.6l1.6 1.6l-1.6 1.6l-1.6 -1.6z" fill="#0000ff"/><path d="M114.3 400.2l1.6 1.6l-1.6 1.6l-1.6 -1.6z" fill="#0000ff"/><path d="M249.7 394.6l1.6 1.6l-1.6 1.6l-1.6 -1.6z" fill="#0000ff"/><path d="M145.7 407.6l1.6 1.6l-1.6 1.6l-1.6 -1.6z" fill="#0000ff"/><path d="M249.7 407.6l1.6 1.6l-1.6 1.6l-1.6 -1.6z" fill="#0000ff"/><path d="M114.3 439.2l1.6 1.6l-1.6 1.6l-1.6 -1.6z" fill="#0000ff"/><path d="M249.7 433.6l1.6 1.6l-1.6 1.6l-1.6 -1.6z" fill="#0000ff"/><path d="M145.7 446.6l1.6 1.6l-1.6 1.6l-1.6 -1.6z" fill="#0000ff"/><path d="M249.7 446.6l1.6 1.6l-1.6 1.6l-1.6 -1.6z" fill="#0000ff"/><path d="M114.3 478.2l1.6 1.6l-1.6 1.6l-1.6 -1.6z" fill="#0000ff"/><path d="M249.7 472.6l1.6 1.6l-1.6 1.6l-1.6 -1.6z" fill="#0000ff"/><rect x="305" y="516" width="1" height="1" fill="#ff0000"/><rect x="305" y="568" width="1" height="1" fill="#ff0000"/><rect x="305" y="581" width="1" height="1" fill="#ff0000"/><path d="M288.7 524.6l1.6 1.6l-1.6 1.6l-1.6 -1.6z" fill="#0000ff"/><path d="M98 585.7V603.6L111.5 594.5ZM124 585.7V603.6L111.5 594.5Z" fill="#0000ff"/><path d="M111.5 594.5V588L108.9 585.9" fill="none" stroke="#3f6fff" stroke-width="0.8"/><path d="M98 611.7V629.6L111.5 620.5ZM124 611.7V629.6L111.5 620.5Z" fill="#0000ff"/><path d="M111.5 620.5V614L108.9 611.9" fill="none" stroke="#3f6fff" stroke-width="0.8"/><path d="M98 663.7V681.6L111.5 672.5ZM124 663.7V681.6L111.5 672.5Z" fill="#0000ff"/><path d="M111.5 672.5V666L108.9 663.9" fill="none" stroke="#3f6fff" stroke-width="0.8"/><path d="M98 689.7V707.6L111.5 698.5ZM124 689.7V707.6L111.5 698.5Z" fill="#0000ff"/><path d="M111.5 698.5V692L108.9 689.9" fill="none" stroke="#3f6fff" stroke-width="0.8"/><path d="M1054.7 316.6l1.6 1.6l-1.6 1.6l-1.6 -1.6z" fill="#0000ff"/><path d="M1054.7 329.6l1.6 1.6l-1.6 1.6l-1.6 -1.6z" fill="#0000ff"/><path d="M1054.7 342.6l1.6 1.6l-1.6 1.6l-1.6 -1.6z" fill="#0000ff"/><path d="M1022.3 413.2l1.6 1.6l-1.6 1.6l-1.6 -1.6z" fill="#0000ff"/><path d="M1022.3 426.2l1.6 1.6l-1.6 1.6l-1.6 -1.6z" fill="#0000ff"/><path d="M1022.3 439.2l1.6 1.6l-1.6 1.6l-1.6 -1.6z" fill="#0000ff"/><path d="M1022.3 452.2l1.6 1.6l-1.6 1.6l-1.6 -1.6z" fill="#0000ff"/><path d="M1022.3 465.2l1.6 1.6l-1.6 1.6l-1.6 -1.6z" fill="#0000ff"/><path d="M1054.7 498.6l1.6 1.6l-1.6 1.6l-1.6 -1.6z" fill="#0000ff"/><rect x="1084" y="542" width="1" height="1" fill="#ff0000"/><rect x="1084" y="555" width="1" height="1" fill="#ff0000"/><rect x="1084" y="568" width="1" height="1" fill="#ff0000"/><path d="M866.3 413.2l1.6 1.6l-1.6 1.6l-1.6 -1.6z" fill="#0000ff"/><path d="M866.3 426.2l1.6 1.6l-1.6 1.6l-1.6 -1.6z" fill="#0000ff"/><path d="M898.7 433.6l1.6 1.6l-1.6 1.6l-1.6 -1.6z" fill="#0000ff"/><path d="M898.7 446.6l1.6 1.6l-1.6 1.6l-1.6 -1.6z" fill="#0000ff"/>
<g fill="#000080"><circle cx="136" cy="61.5" r="2.55"/><circle cx="136" cy="126.5" r="2.55"/><circle cx="175" cy="61.5" r="2.55"/><circle cx="175" cy="126.5" r="2.55"/><circle cx="214" cy="61.5" r="2.55"/><circle cx="214" cy="126.5" r="2.55"/><circle cx="253" cy="61.5" r="2.55"/><circle cx="253" cy="126.5" r="2.55"/><circle cx="292" cy="61.5" r="2.55"/><circle cx="292" cy="126.5" r="2.55"/><circle cx="331" cy="61.5" r="2.55"/><circle cx="409" cy="61.5" r="2.55"/><circle cx="422" cy="61.5" r="2.55"/><circle cx="435" cy="61.5" r="2.55"/><circle cx="448" cy="61.5" r="2.55"/><circle cx="461" cy="61.5" r="2.55"/><circle cx="539" cy="61.5" r="2.55"/><circle cx="578" cy="61.5" r="2.55"/><circle cx="617" cy="61.5" r="2.55"/><circle cx="617" cy="126.5" r="2.55"/><circle cx="694" cy="152.5" r="2.55"/><circle cx="720" cy="152.5" r="2.55"/><circle cx="746" cy="152.5" r="2.55"/><circle cx="772" cy="152.5" r="2.55"/><circle cx="643" cy="333.5" r="2.55"/><circle cx="669" cy="424.5" r="2.55"/><circle cx="707" cy="424.5" r="2.55"/><circle cx="669" cy="463.5" r="2.55"/><circle cx="707" cy="515.5" r="2.55"/><circle cx="669" cy="606.5" r="2.55"/><circle cx="707" cy="606.5" r="2.55"/><circle cx="746" cy="606.5" r="2.55"/><circle cx="785" cy="606.5" r="2.55"/><circle cx="396" cy="671.5" r="2.55"/><circle cx="409" cy="671.5" r="2.55"/><circle cx="422" cy="671.5" r="2.55"/><circle cx="435" cy="671.5" r="2.55"/><circle cx="448" cy="671.5" r="2.55"/><circle cx="461" cy="671.5" r="2.55"/><circle cx="539" cy="671.5" r="2.55"/><circle cx="552" cy="671.5" r="2.55"/><circle cx="305" cy="191.5" r="2.55"/><circle cx="266" cy="204.5" r="2.55"/><circle cx="305" cy="229.5" r="2.55"/><circle cx="266" cy="242.5" r="2.55"/><circle cx="305" cy="268.5" r="2.55"/><circle cx="266" cy="281.5" r="2.55"/><circle cx="305" cy="307.5" r="2.55"/><circle cx="266" cy="320.5" r="2.55"/><circle cx="305" cy="346.5" r="2.55"/><circle cx="266" cy="359.5" r="2.55"/><circle cx="305" cy="385.5" r="2.55"/><circle cx="266" cy="398.5" r="2.55"/><circle cx="305" cy="424.5" r="2.55"/><circle cx="266" cy="437.5" r="2.55"/><circle cx="305" cy="463.5" r="2.55"/><circle cx="266" cy="476.5" r="2.55"/><circle cx="643" cy="684.5" r="2.55"/><circle cx="643" cy="749.5" r="2.55"/><circle cx="682" cy="684.5" r="2.55"/><circle cx="682" cy="749.5" r="2.55"/><circle cx="824" cy="684.5" r="2.55"/><circle cx="824" cy="749.5" r="2.55"/><circle cx="1006" cy="191.5" r="2.55"/><circle cx="1006" cy="229.5" r="2.55"/><circle cx="1045" cy="191.5" r="2.55"/><circle cx="1045" cy="229.5" r="2.55"/><circle cx="1084" cy="191.5" r="2.55"/><circle cx="1084" cy="229.5" r="2.55"/><circle cx="1123" cy="191.5" r="2.55"/><circle cx="1123" cy="229.5" r="2.55"/><circle cx="1162" cy="191.5" r="2.55"/><circle cx="1162" cy="229.5" r="2.55"/><circle cx="837" cy="411.5" r="2.55"/><circle cx="837" cy="424.5" r="2.55"/><circle cx="837" cy="437.5" r="2.55"/></g>
<g opacity="0.996"><text class="p" x="28.5" y="1.6" text-anchor="middle" font-size="13">1</text>
<text class="p" x="280.5" y="1.6" text-anchor="middle" font-size="13">2</text>
<text class="p" x="531" y="1.6" text-anchor="middle" font-size="13">3</text>
<text class="p" x="783.5" y="1.6" text-anchor="middle" font-size="13">4</text>
<text class="p" x="1034" y="1.6" text-anchor="middle" font-size="13">5</text>
<text class="p" x="353.2" y="195.5">IN8N</text>
<text class="p" x="333" y="189.1" text-anchor="end">1</text>
<text class="p" x="353.2" y="208.5">IN8P</text>
<text class="p" x="333" y="202.1" text-anchor="end">2</text>
<text class="p" x="353.2" y="233.5">IN7N</text>
<text class="p" x="333" y="227.1" text-anchor="end">3</text>
<text class="p" x="353.2" y="246.5">IN7P</text>
<text class="p" x="333" y="240.1" text-anchor="end">4</text>
<text class="p" x="353.2" y="272.5">IN6N</text>
<text class="p" x="333" y="266.1" text-anchor="end">5</text>
<text class="p" x="353.2" y="285.5">IN6P</text>
<text class="p" x="333" y="279.1" text-anchor="end">6</text>
<text class="p" x="353.2" y="311.5">IN5N</text>
<text class="p" x="333" y="305.1" text-anchor="end">7</text>
<text class="p" x="353.2" y="324.5">IN5P</text>
<text class="p" x="333" y="318.1" text-anchor="end">8</text>
<text class="p" x="353.2" y="350.5">IN4N</text>
<text class="p" x="333" y="344.1" text-anchor="end">9</text>
<text class="p" x="353.2" y="363.5">IN4P</text>
<text class="p" x="333" y="357.1" text-anchor="end">10</text>
<text class="p" x="353.2" y="389.5">IN3N</text>
<text class="p" x="333" y="383.1" text-anchor="end">11</text>
<text class="p" x="353.2" y="402.5">IN3P</text>
<text class="p" x="333" y="396.1" text-anchor="end">12</text>
<text class="p" x="353.2" y="428.5">IN2N</text>
<text class="p" x="333" y="422.1" text-anchor="end">13</text>
<text class="p" x="353.2" y="441.5">IN2P</text>
<text class="p" x="333" y="435.1" text-anchor="end">14</text>
<text class="p" x="353.2" y="467.5">IN1N</text>
<text class="p" x="333" y="461.1" text-anchor="end">15</text>
<text class="p" x="353.2" y="480.5">IN1P</text>
<text class="p" x="333" y="474.1" text-anchor="end">16</text>
<text class="p" x="353.2" y="519.5">OPAMPP</text>
<text class="p" x="333" y="513.1" text-anchor="end">60</text>
<text class="p" x="353.2" y="532.5">OPAMPN</text>
<text class="p" x="333" y="526.1" text-anchor="end">61</text>
<text class="p" x="353.2" y="545.5">OPAMPOUT</text>
<text class="p" x="333" y="539.1" text-anchor="end">63</text>
<text class="p" x="353.2" y="571.5">TESTP</text>
<text class="p" x="333" y="565.1" text-anchor="end">17</text>
<text class="p" x="353.2" y="584.5">TESTN</text>
<text class="p" x="333" y="578.1" text-anchor="end">18</text>
<text class="p" x="594.2" y="208.8" text-anchor="end">CLK</text>
<text class="p" x="614.3" y="202.1">37</text>
<text class="p" x="594.2" y="221.8" text-anchor="end">CLKSEL</text>
<text class="p" x="614.3" y="215.1">52</text>
<text class="p" x="594.2" y="233.8" text-anchor="end">PWDN</text>
<text class="p" x="614.3" y="227.1">35</text>
<text class="p" x="594.2" y="246.8" text-anchor="end">RESET</text>
<text class="p" x="614.3" y="240.1">36</text>
<text class="p" x="594.2" y="272.8" text-anchor="end">CS</text>
<text class="p" x="614.3" y="266.1">39</text>
<text class="p" x="594.2" y="285.8" text-anchor="end">SCLK</text>
<text class="p" x="614.3" y="279.1">40</text>
<text class="p" x="594.2" y="298.8" text-anchor="end">DIN</text>
<text class="p" x="614.3" y="292.1">34</text>
<text class="p" x="594.2" y="311.8" text-anchor="end">DOUT</text>
<text class="p" x="614.3" y="305.1">43</text>
<text class="p" x="594.2" y="337.8" text-anchor="end">START</text>
<text class="p" x="614.3" y="331.1">38</text>
<text class="p" x="594.2" y="350.8" text-anchor="end">DRDY</text>
<text class="p" x="614.3" y="344.1">47</text>
<text class="p" x="594.2" y="363.8" text-anchor="end">GPIO4</text>
<text class="p" x="614.3" y="357.1">46</text>
<text class="p" x="594.2" y="376.8" text-anchor="end">GPIO3</text>
<text class="p" x="614.3" y="370.1">45</text>
<text class="p" x="594.2" y="389.8" text-anchor="end">GPIO2</text>
<text class="p" x="614.3" y="383.1">44</text>
<text class="p" x="594.2" y="402.8" text-anchor="end">GPIO1</text>
<text class="p" x="614.3" y="396.1">42</text>
<text class="p" x="594.2" y="415.8" text-anchor="end">DAISY_IN</text>
<text class="p" x="614.3" y="409.1">41</text>
<text class="p" x="594.2" y="454.8" text-anchor="end">VREFN</text>
<text class="p" x="614.3" y="448.1">25</text>
<text class="p" x="594.2" y="467.8" text-anchor="end">VREFP</text>
<text class="p" x="614.3" y="461.1">24</text>
<text class="p" x="594.2" y="493.8" text-anchor="end">VCAP1</text>
<text class="p" x="614.3" y="487.1">28</text>
<text class="p" x="594.2" y="506.8" text-anchor="end">VCAP2</text>
<text class="p" x="614.3" y="500.1">30</text>
<text class="p" x="594.2" y="519.8" text-anchor="end">VCAP3</text>
<text class="p" x="614.3" y="513.1">55</text>
<text class="p" x="594.2" y="532.8" text-anchor="end">VCAP4</text>
<text class="p" x="614.3" y="526.1">26</text>
<text class="p" x="594.2" y="558.8" text-anchor="end">NC</text>
<text class="p" x="614.3" y="552.1">27</text>
<text class="p" x="594.2" y="571.8" text-anchor="end">NC</text>
<text class="p" x="614.3" y="565.1">29</text>
<text class="p" x="594.2" y="584.8" text-anchor="end">NC</text>
<text class="p" x="614.3" y="578.1">62</text>
<text class="p" x="594.2" y="597.8" text-anchor="end">NC</text>
<text class="p" x="614.3" y="591.1">64</text>
<text class="p" x="413.3" y="175.5" text-anchor="end" transform="rotate(-90 413.3 175.5)">AVDD</text>
<text class="p" x="406.1" y="155" transform="rotate(-90 406.1 155)">19</text>
<text class="p" x="426.3" y="175.5" text-anchor="end" transform="rotate(-90 426.3 175.5)">AVDD</text>
<text class="p" x="419.1" y="155" transform="rotate(-90 419.1 155)">21</text>
<text class="p" x="439.3" y="175.5" text-anchor="end" transform="rotate(-90 439.3 175.5)">AVDD</text>
<text class="p" x="432.1" y="155" transform="rotate(-90 432.1 155)">22</text>
<text class="p" x="452.3" y="175.5" text-anchor="end" transform="rotate(-90 452.3 175.5)">AVDD</text>
<text class="p" x="445.1" y="155" transform="rotate(-90 445.1 155)">56</text>
<text class="p" x="465.3" y="175.5" text-anchor="end" transform="rotate(-90 465.3 175.5)">AVDD</text>
<text class="p" x="458.1" y="155" transform="rotate(-90 458.1 155)">59</text>
<text class="p" x="491.3" y="175.5" text-anchor="end" transform="rotate(-90 491.3 175.5)">AVDD1</text>
<text class="p" x="484.1" y="155" transform="rotate(-90 484.1 155)">54</text>
<text class="p" x="530.3" y="175.5" text-anchor="end" transform="rotate(-90 530.3 175.5)">DVDD</text>
<text class="p" x="523.1" y="155" transform="rotate(-90 523.1 155)">48</text>
<text class="p" x="543.3" y="175.5" text-anchor="end" transform="rotate(-90 543.3 175.5)">DVDD</text>
<text class="p" x="536.1" y="155" transform="rotate(-90 536.1 155)">50</text>
<text class="p" x="400.3" y="610.3" transform="rotate(-90 400.3 610.3)">AVSS</text>
<text class="p" x="393.1" y="630" text-anchor="end" transform="rotate(-90 393.1 630)">20</text>
<text class="p" x="413.3" y="610.3" transform="rotate(-90 413.3 610.3)">AVSS</text>
<text class="p" x="406.1" y="630" text-anchor="end" transform="rotate(-90 406.1 630)">23</text>
<text class="p" x="426.3" y="610.3" transform="rotate(-90 426.3 610.3)">AVSS</text>
<text class="p" x="419.1" y="630" text-anchor="end" transform="rotate(-90 419.1 630)">32</text>
<text class="p" x="439.3" y="610.3" transform="rotate(-90 439.3 610.3)">AVSS</text>
<text class="p" x="432.1" y="630" text-anchor="end" transform="rotate(-90 432.1 630)">57</text>
<text class="p" x="452.3" y="610.3" transform="rotate(-90 452.3 610.3)">AVSS</text>
<text class="p" x="445.1" y="630" text-anchor="end" transform="rotate(-90 445.1 630)">58</text>
<text class="p" x="465.3" y="610.3" transform="rotate(-90 465.3 610.3)">RESV1</text>
<text class="p" x="458.1" y="630" text-anchor="end" transform="rotate(-90 458.1 630)">31</text>
<text class="p" x="491.3" y="610.3" transform="rotate(-90 491.3 610.3)">AVSS1</text>
<text class="p" x="484.1" y="630" text-anchor="end" transform="rotate(-90 484.1 630)">53</text>
<text class="p" x="530.3" y="610.3" transform="rotate(-90 530.3 610.3)">DGND</text>
<text class="p" x="523.1" y="630" text-anchor="end" transform="rotate(-90 523.1 630)">33</text>
<text class="p" x="543.3" y="610.3" transform="rotate(-90 543.3 610.3)">DGND</text>
<text class="p" x="536.1" y="630" text-anchor="end" transform="rotate(-90 536.1 630)">49</text>
<text class="p" x="556.3" y="610.3" transform="rotate(-90 556.3 610.3)">DGND</text>
<text class="p" x="549.1" y="630" text-anchor="end" transform="rotate(-90 549.1 630)">51</text>
<text class="d" x="344.5" y="629.3">ADS131E08</text>
<text class="d" x="241.5" y="137">U2</text>
<text class="n" x="98.5" y="32.5" text-anchor="middle">AVDD</text>
<text class="d" x="149.5" y="98.3">C22</text>
<text class="d v" x="137.5" y="111.3">1uF/16V</text>
<text class="d" x="188.5" y="98.3">C23</text>
<text class="d v" x="176.5" y="111.3">1uF/16V</text>
<text class="d" x="227.5" y="98.3">C4</text>
<text class="d" x="227.5" y="110.3">0.1uF</text>
<text class="d" x="266.5" y="98.3">C5</text>
<text class="d" x="266.5" y="110.3">0.1uF</text>
<text class="d" x="305.5" y="98.3">C24</text>
<text class="d" x="305.5" y="110.3">0.1uF</text>
<text class="d" x="344.5" y="98.3">C16</text>
<text class="d" x="344.5" y="110.3">0.1uF</text>
<text class="n" x="136.5" y="162.9" text-anchor="middle">AGND</text>
<text class="d" x="591.5" y="98.3">C14</text>
<text class="d" x="591.5" y="110.3">0.1uF</text>
<text class="d" x="630.5" y="98.3">C36</text>
<text class="d v" x="618.5" y="111.3">1uF/16V</text>
<text class="n" x="617.5" y="32.5" text-anchor="middle">VCC3V3</text>
<text class="n" x="617.5" y="163.3" text-anchor="middle">GND</text>
<text class="n" x="694.5" y="136.5" text-anchor="middle">VCC3V3</text>
<text class="d" x="700.3" y="174.8">R1</text>
<text class="d" x="700.3" y="188.1">10K</text>
<text class="d" x="726.3" y="174.8">R2</text>
<text class="d" x="726.3" y="188.1">10K</text>
<text class="d" x="752.3" y="174.8">R3</text>
<text class="d" x="752.3" y="188.1">10K</text>
<text class="d" x="778.3" y="174.8">R5</text>
<text class="d" x="778.3" y="188.1">10K</text>
<text class="d" x="804.3" y="174.8">R74</text>
<text class="d" x="804.3" y="188.1">10K</text>
<text class="n" x="642.3" y="228.3">ADC_nPWDN</text>
<text class="n" x="642.3" y="241.3">ADC_nRST</text>
<text class="n" x="642.3" y="267.3">SPI1_CS1</text>
<text class="n" x="642.3" y="280.3">SPI1_SCK</text>
<text class="n" x="642.3" y="293.3">SPI1_MOSI</text>
<text class="n" x="642.3" y="306.3">SPI1_MISO</text>
<text class="n" x="642.3" y="319.3">ADC_START</text>
<text class="d" x="655.9" y="331.2">R57</text>
<text class="d" x="708" y="331.2">10K</text>
<text class="n" x="749" y="338">GND</text>
<text class="n" x="642.3" y="345.3">ADC_nDRDY</text>
<text class="d" x="682.5" y="448.3">C46</text>
<text class="d" x="682.5" y="460.3">0.1uF</text>
<text class="d" x="720.5" y="448.3">C47</text>
<text class="d v" x="708.5" y="461.3">10uF/16V</text>
<text class="n" x="707.5" y="396.7" text-anchor="middle">AGND</text>
<text class="d" x="682.5" y="578.3">C50</text>
<text class="d v" x="670.5" y="591.3">1uF/16V</text>
<text class="d" x="720.5" y="578.3">C49</text>
<text class="d" x="720.5" y="590.3">0.1uF</text>
<text class="d" x="759.5" y="578.3">C51</text>
<text class="d v" x="747.5" y="591.3">1uF/16V</text>
<text class="d" x="798.5" y="578.3">C52</text>
<text class="d v" x="786.5" y="591.3">1uF/16V</text>
<text class="d" x="837.5" y="578.3">C53</text>
<text class="d v" x="825.5" y="591.3">22uF/16V</text>
<text class="n" x="669.5" y="642.9" text-anchor="middle">AGND</text>
<text class="n" x="396.5" y="707.9" text-anchor="middle">AGND</text>
<text class="n" x="552.5" y="708.3" text-anchor="middle">GND</text>
<text class="n" x="68.9" y="182.5" text-anchor="end">AGND</text>
<text class="d" x="97.8" y="176.2">R11</text>
<text class="d" x="149.8" y="176.2">1M</text>
<text class="n" x="175.5" y="176">IN8N</text>
<text class="d" x="201" y="176.2">R12</text>
<text class="d" x="253" y="176.2">499R</text>
<text class="d" x="266" y="189.3">C39</text>
<text class="d v" x="293" y="189.3">1uF/16V</text>
<text class="n" x="81.5" y="208.8" text-anchor="end">AVDD</text>
<text class="d" x="97.8" y="202.2">R22</text>
<text class="d" x="149.8" y="202.2">1M</text>
<text class="n" x="175.5" y="202">IN8P</text>
<text class="d" x="201" y="202.2">R23</text>
<text class="d" x="253" y="202.2">499R</text>
<text class="n" x="68.9" y="221.5" text-anchor="end">AGND</text>
<text class="d" x="97.8" y="215.2">R25</text>
<text class="d" x="149.8" y="215.2">1M</text>
<text class="n" x="175.5" y="215">IN7N</text>
<text class="d" x="201" y="215.2">R26</text>
<text class="d" x="253" y="215.2">499R</text>
<text class="d" x="266" y="227.3">C40</text>
<text class="d v" x="293" y="227.3">1uF/16V</text>
<text class="n" x="81.5" y="246.8" text-anchor="end">AVDD</text>
<text class="d" x="97.8" y="240.2">R27</text>
<text class="d" x="149.8" y="240.2">1M</text>
<text class="n" x="175.5" y="240">IN7P</text>
<text class="d" x="201" y="240.2">R31</text>
<text class="d" x="253" y="240.2">499R</text>
<text class="n" x="68.9" y="259.5" text-anchor="end">AGND</text>
<text class="d" x="97.8" y="253.2">R36</text>
<text class="d" x="149.8" y="253.2">1M</text>
<text class="n" x="175.5" y="253">IN6N</text>
<text class="d" x="201" y="253.2">R48</text>
<text class="d" x="253" y="253.2">499R</text>
<text class="d" x="266" y="266.3">C41</text>
<text class="d v" x="293" y="266.3">1uF/16V</text>
<text class="n" x="81.5" y="285.8" text-anchor="end">AVDD</text>
<text class="d" x="97.8" y="279.2">R49</text>
<text class="d" x="149.8" y="279.2">1M</text>
<text class="n" x="175.5" y="279">IN6P</text>
<text class="d" x="201" y="279.2">R50</text>
<text class="d" x="253" y="279.2">499R</text>
<text class="n" x="68.9" y="298.5" text-anchor="end">AGND</text>
<text class="d" x="97.8" y="292.2">R51</text>
<text class="d" x="149.8" y="292.2">1M</text>
<text class="n" x="175.5" y="292">IN5N</text>
<text class="d" x="201" y="292.2">R52</text>
<text class="d" x="253" y="292.2">499R</text>
<text class="d" x="266" y="305.3">C42</text>
<text class="d v" x="293" y="305.3">1uF/16V</text>
<text class="n" x="81.5" y="324.8" text-anchor="end">AVDD</text>
<text class="d" x="97.8" y="318.2">R53</text>
<text class="d" x="149.8" y="318.2">1M</text>
<text class="n" x="175.5" y="318">IN5P</text>
<text class="d" x="201" y="318.2">R54</text>
<text class="d" x="253" y="318.2">499R</text>
<text class="n" x="68.9" y="337.5" text-anchor="end">AGND</text>
<text class="d" x="97.8" y="331.2">R55</text>
<text class="d" x="149.8" y="331.2">1M</text>
<text class="n" x="175.5" y="331">IN4N</text>
<text class="d" x="201" y="331.2">R56</text>
<text class="d" x="253" y="331.2">499R</text>
<text class="d" x="266" y="344.3">C43</text>
<text class="d v" x="293" y="344.3">1uF/16V</text>
<text class="n" x="81.5" y="363.8" text-anchor="end">AVDD</text>
<text class="d" x="97.8" y="357.2">R58</text>
<text class="d" x="149.8" y="357.2">1M</text>
<text class="n" x="175.5" y="357">IN4P</text>
<text class="d" x="201" y="357.2">R59</text>
<text class="d" x="253" y="357.2">499R</text>
<text class="n" x="68.9" y="376.5" text-anchor="end">AGND</text>
<text class="d" x="97.8" y="370.2">R60</text>
<text class="d" x="149.8" y="370.2">1M</text>
<text class="n" x="175.5" y="370">IN3N</text>
<text class="d" x="201" y="370.2">R61</text>
<text class="d" x="253" y="370.2">499R</text>
<text class="d" x="266" y="383.3">C44</text>
<text class="d v" x="293" y="383.3">1uF/16V</text>
<text class="n" x="81.5" y="402.8" text-anchor="end">AVDD</text>
<text class="d" x="97.8" y="396.2">R62</text>
<text class="d" x="149.8" y="396.2">1M</text>
<text class="n" x="175.5" y="396">IN3P</text>
<text class="d" x="201" y="396.2">R63</text>
<text class="d" x="253" y="396.2">499R</text>
<text class="n" x="68.9" y="415.5" text-anchor="end">AGND</text>
<text class="d" x="97.8" y="409.2">R64</text>
<text class="d" x="149.8" y="409.2">1M</text>
<text class="n" x="175.5" y="409">IN2N</text>
<text class="d" x="201" y="409.2">R65</text>
<text class="d" x="253" y="409.2">499R</text>
<text class="d" x="266" y="422.3">C45</text>
<text class="d v" x="293" y="422.3">1uF/16V</text>
<text class="n" x="81.5" y="441.8" text-anchor="end">AVDD</text>
<text class="d" x="97.8" y="435.2">R66</text>
<text class="d" x="149.8" y="435.2">1M</text>
<text class="n" x="175.5" y="435">IN2P</text>
<text class="d" x="201" y="435.2">R67</text>
<text class="d" x="253" y="435.2">499R</text>
<text class="n" x="68.9" y="454.5" text-anchor="end">AGND</text>
<text class="d" x="97.8" y="448.2">R68</text>
<text class="d" x="149.8" y="448.2">1M</text>
<text class="n" x="175.5" y="448">IN1N</text>
<text class="d" x="201" y="448.2">R69</text>
<text class="d" x="253" y="448.2">499R</text>
<text class="d" x="266" y="461.3">C48</text>
<text class="d v" x="293" y="461.3">1uF/16V</text>
<text class="n" x="81.5" y="480.8" text-anchor="end">AVDD</text>
<text class="d" x="97.8" y="474.2">R70</text>
<text class="d" x="149.8" y="474.2">1M</text>
<text class="n" x="175.5" y="474">IN1P</text>
<text class="d" x="201" y="474.2">R71</text>
<text class="d" x="253" y="474.2">499R</text>
<text class="d" x="240" y="526.5">R19</text>
<text class="d" x="292.8" y="526.5">0R</text>
<text class="d" x="72.2" y="591.2">D3</text>
<text class="d v" x="72.2" y="604.2">ESD5B5.0ST1G</text>
<text class="n" x="45.9" y="591.2">IN8P</text>
<text class="n" x="45.9" y="604.2">IN8N</text>
<text class="d" x="72.2" y="617.2">D6</text>
<text class="d v" x="72.2" y="630.2">ESD5B5.0ST1G</text>
<text class="n" x="45.9" y="617.2">IN7P</text>
<text class="n" x="45.9" y="630.2">IN7N</text>
<text class="d" x="72.2" y="669.2">D7</text>
<text class="d v" x="72.2" y="682.2">ESD5B5.0ST1G</text>
<text class="n" x="45.9" y="669.2">IN6P</text>
<text class="n" x="45.9" y="682.2">IN6N</text>
<text class="d" x="72.2" y="695.2">D8</text>
<text class="d v" x="72.2" y="708.2">ESD5B5.0ST1G</text>
<text class="n" x="45.9" y="695.2">IN5P</text>
<text class="n" x="45.9" y="708.2">IN5N</text>
<text class="n" x="49" y="572">GND</text>
<text class="n" x="35.5" y="585.1">EXT2_5V</text>
<text class="n" x="49" y="650">GND</text>
<text class="n" x="35.5" y="663.1">EXT2_5V</text>
<text class="n" x="49" y="818"></text>
<text class="d" x="21.3" y="733.5" text-anchor="end">DSS</text>
<text class="n" x="643.5" y="668.5" text-anchor="middle">AVDD</text>
<text class="n" x="824.5" y="668.5" text-anchor="middle">DC5V</text>
<text class="d" x="668.9" y="682.5">FB4</text>
<text class="p" x="692.2" y="682.5">1</text>
<text class="p" x="769.5" y="682.5">2</text>
<text class="d" x="694.5" y="695.5">120ohm</text>
<text class="d" x="668.9" y="747.5">FB5</text>
<text class="p" x="692.2" y="747.5">1</text>
<text class="p" x="769.5" y="747.5">2</text>
<text class="d" x="694.5" y="760.5">120ohm</text>
<text class="d" x="656.5" y="721.3">C54</text>
<text class="d" x="656.5" y="733.3">0.1uF</text>
<text class="d" x="695.5" y="721.3">C56</text>
<text class="d v" x="683.5" y="734.3">10uF/16V</text>
<text class="d" x="837.5" y="721.3">C58</text>
<text class="d" x="837.5" y="733.3">0.1uF</text>
<text class="n" x="643.5" y="785.9" text-anchor="middle">AGND</text>
<text class="n" x="824.5" y="786.3" text-anchor="middle">GND</text>
<text class="n" x="1006.5" y="175.5" text-anchor="middle">VCC3V3</text>
<text class="d" x="1019.5" y="214.8">C13</text>
<text class="d v" x="1007.5" y="227.8">10uF/16V</text>
<text class="d" x="1058.5" y="214.8">C9</text>
<text class="d" x="1058.5" y="226.8">0.1uF</text>
<text class="d" x="1097.5" y="214.8">C10</text>
<text class="d" x="1097.5" y="226.8">0.1uF</text>
<text class="d" x="1136.5" y="214.8">C28</text>
<text class="d" x="1136.5" y="226.8">0.1uF</text>
<text class="d" x="1175.5" y="214.8">C29</text>
<text class="d" x="1175.5" y="226.8">0.1uF</text>
<text class="n" x="1006.5" y="266.3" text-anchor="middle">GND</text>
<text class="d" x="1123.5" y="267.1">U4</text>
<text class="d" x="1123.5" y="656.8">STM32L151C8T6</text>
<text class="p" x="1112.5" y="304.9" text-anchor="end">38</text>
<text class="p" x="1131.8" y="311.9">PA15-SPI1_NSS</text>
<text class="n" x="941.2" y="305.7">SPI1_CS0</text>
<text class="p" x="1112.5" y="317.9" text-anchor="end">39</text>
<text class="p" x="1131.8" y="324.9">PB3-SPI1_SCK</text>
<text class="d" x="1006.2" y="318.2">R14</text>
<text class="d" x="1058.2" y="318.2">33R</text>
<text class="n" x="941.2" y="318.7">SPI1_SCK</text>
<text class="p" x="1112.5" y="330.9" text-anchor="end">40</text>
<text class="p" x="1131.8" y="337.9">PB4-SPI1_MISO</text>
<text class="d" x="1006.2" y="331.2">R16</text>
<text class="d" x="1058.2" y="331.2">33R</text>
<text class="n" x="941.2" y="331.7">SPI1_MISO</text>
<text class="p" x="1112.5" y="343.9" text-anchor="end">41</text>
<text class="p" x="1131.8" y="350.9">PB5-SPI1_MOSI</text>
<text class="d" x="1006.2" y="344.2">R17</text>
<text class="d" x="1058.2" y="344.2">33R</text>
<text class="n" x="941.2" y="344.7">SPI1_MOSI</text>
<text class="p" x="1112.5" y="369.9" text-anchor="end">10</text>
<text class="p" x="1131.8" y="376.9">PA0-TIM2_CH1</text>
<text class="n" x="941.2" y="370.7">RPM_IN1</text>
<text class="p" x="1112.5" y="382.9" text-anchor="end">11</text>
<text class="p" x="1131.8" y="389.9">PA1-TIM2_CH2</text>
<text class="n" x="941.2" y="383.7">DOUT</text>
<text class="p" x="1112.5" y="408.9" text-anchor="end">14</text>
<text class="p" x="1131.8" y="415.9">PA4-ADC_IN4</text>
<text class="d" x="1006.2" y="409.2">R39</text>
<text class="d" x="1058.2" y="409.2">499R</text>
<text class="n" x="941.2" y="409.7">AIN1</text>
<text class="p" x="1112.5" y="421.9" text-anchor="end">15</text>
<text class="p" x="1131.8" y="428.9">PA5-ADC_IN5</text>
<text class="d" x="1006.2" y="422.2">R40</text>
<text class="d" x="1058.2" y="422.2">499R</text>
<text class="n" x="941.2" y="422.7">AIN2</text>
<text class="p" x="1112.5" y="434.9" text-anchor="end">16</text>
<text class="p" x="1131.8" y="441.9">PA6-ADC_IN6</text>
<text class="d" x="1006.2" y="435.2">R45</text>
<text class="d" x="1058.2" y="435.2">499R</text>
<text class="n" x="941.2" y="435.7">AIN3</text>
<text class="p" x="1112.5" y="447.9" text-anchor="end">17</text>
<text class="p" x="1131.8" y="454.9">PA7-ADC_IN7</text>
<text class="d" x="1006.2" y="448.2">R46</text>
<text class="d" x="1058.2" y="448.2">499R</text>
<text class="n" x="941.2" y="448.7">AIN4</text>
<text class="p" x="1112.5" y="460.9" text-anchor="end">18</text>
<text class="p" x="1131.8" y="467.9">PB0_ADC_IN8</text>
<text class="d" x="1006.2" y="461.2">R77</text>
<text class="d" x="1058.2" y="461.2">499R</text>
<text class="n" x="941.2" y="461.7">5V_MON</text>
<text class="p" x="1112.5" y="473.9" text-anchor="end">19</text>
<text class="p" x="1131.8" y="480.9">PB1-ADC_IN9</text>
<text class="n" x="941.2" y="474.7">ADC_START</text>
<text class="p" x="1112.5" y="499.9" text-anchor="end">20</text>
<text class="p" x="1131.8" y="506.9">PB2</text>
<text class="d" x="1006.2" y="500.2">R20</text>
<text class="d" x="1058.2" y="500.2">10K</text>
<text class="p" x="1112.5" y="512.9" text-anchor="end">29</text>
<text class="p" x="1131.8" y="519.9">PA8</text>
<text class="n" x="941.2" y="513.7">ADC_nPWDN</text>
<text class="p" x="1112.5" y="525.9" text-anchor="end">45</text>
<text class="p" x="1131.8" y="532.9">PB8-I2C1_SCL</text>
<text class="n" x="941.2" y="526.7">SPI1_CS1</text>
<text class="p" x="1112.5" y="538.9" text-anchor="end">46</text>
<text class="p" x="1131.8" y="545.9">PB9-I2C1_SDA</text>
<text class="p" x="1112.5" y="551.9" text-anchor="end">21</text>
<text class="p" x="1131.8" y="558.9">PB10-I2C2_SCL</text>
<text class="p" x="1112.5" y="564.9" text-anchor="end">22</text>
<text class="p" x="1131.8" y="571.9">PB11-I2C2_SDA</text>
<text class="p" x="1112.5" y="577.9" text-anchor="end">25</text>
<text class="p" x="1131.8" y="584.9">PB12-IO</text>
<text class="n" x="941.2" y="578.7">CVM_nPWREN</text>
<text class="p" x="1112.5" y="590.9" text-anchor="end">26</text>
<text class="p" x="1131.8" y="597.9">PB13-IO</text>
<text class="n" x="941.2" y="591.7">CVM_nOC</text>
<text class="p" x="1112.5" y="603.9" text-anchor="end">27</text>
<text class="p" x="1131.8" y="610.9">PB14</text>
<text class="n" x="941.2" y="604.7">ADC_nDRDY</text>
<text class="p" x="1112.5" y="616.9" text-anchor="end">28</text>
<text class="p" x="1131.8" y="623.9">PB15</text>
<text class="n" x="941.2" y="617.7">ADC_nRST</text>
<text class="n" x="963.5" y="506.7" text-anchor="end">GND</text>
<text class="n" x="837.5" y="382.5" text-anchor="middle">VCC3V3</text>
<text class="d" x="850.5" y="409.2">R15</text>
<text class="d" x="890" y="409.2">10K 0.1%</text>
<text class="d" x="850.5" y="422.2">R44</text>
<text class="d" x="890" y="422.2">10K 0.1%</text>
<text class="d" x="850.5" y="435.2">R21</text>
<text class="d" x="890" y="435.2">10K 0.1%</text>
<text class="d" x="850.5" y="448.2">R47</text>
<text class="d" x="890" y="448.2">10K 0.1%</text></g>
</svg>
</body></html>
